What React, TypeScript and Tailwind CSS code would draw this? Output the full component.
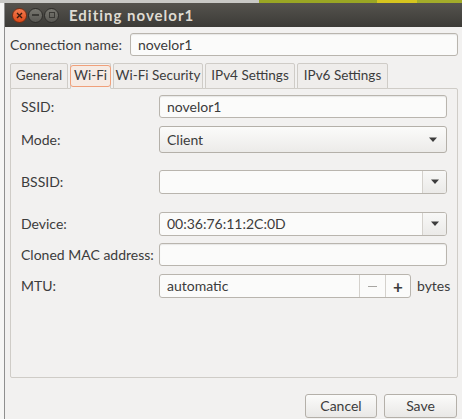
import React from 'react';

const font = { fontFamily: 'Lato, "Noto Sans", sans-serif' };

function Entry({ value, className = '' }: { value?: string; className?: string }) {
  return (
    <div
      className={`h-[23px] flex items-center px-[7px] rounded-[3px] border border-[#b9b5ae] bg-[#fbfbfa] shadow-[inset_0_1px_1px_rgba(0,0,0,0.08)] text-[#3c3c3c] ${className}`}
    >
      {value}
    </div>
  );
}

function Arrow() {
  return (
    <svg width="10" height="6" viewBox="0 0 10 6">
      <path d="M1 0.5h8L5 5z" fill="#3c3c3c" />
    </svg>
  );
}

function Field({ label, children }: { label: string; children: React.ReactNode }) {
  return (
    <div className="flex items-center">
      <div className="w-[138px] text-[#3c3c3c]">{label}</div>
      <div className="w-[288px]">{children}</div>
    </div>
  );
}

const tabs = [
  { name: 'General', w: 'w-[58px]' },
  { name: 'Wi-Fi', w: 'w-[41px]' },
  { name: 'Wi-Fi Security', w: 'w-[90px]' },
  { name: 'IPv4 Settings', w: 'w-[90px]' },
  { name: 'IPv6 Settings', w: 'w-[91px]' },
];

export default function App() {
  return (
    <div className="w-[462px] h-[419px] overflow-hidden bg-[#f2f1f0] text-[14px] leading-none" style={font}>
      {/* desktop strip above the window */}
      <div className="flex h-[3px]">
        <div className="w-[259px] bg-[#c9c9c6]" />
        <div className="w-[118px] bg-[#9aa624]" />
        <div className="w-[40px] bg-[#d6c51e]" />
        <div className="flex-1 bg-[#a3ac2a]" />
      </div>

      <div className="flex h-[416px]">
        <div className="w-[5px] bg-[#f6f6f5] border-r border-[#8f8f8f]" />

        <div className="flex-1 flex flex-col">
          {/* title bar */}
          <div className="h-[24px] flex items-center bg-gradient-to-b from-[#55534e] to-[#3c3b37]">
            <div className="flex items-center gap-[1px] pl-[7px]">
              <div className="w-[15px] h-[15px] rounded-full bg-gradient-to-b from-[#f47a4d] to-[#dd4814] border border-[#7a2d12] flex items-center justify-center">
                <svg width="7" height="7" viewBox="0 0 7 7">
                  <path d="M1 1l5 5M6 1l-5 5" stroke="#3a1a0e" strokeWidth="1.4" />
                </svg>
              </div>
              <div className="w-[15px] h-[15px] rounded-full bg-gradient-to-b from-[#77766f] to-[#5a5954] border border-[#2e2d2a] flex items-center justify-center">
                <div className="w-[7px] h-[2px] bg-[#3a3935]" />
              </div>
              <div className="w-[15px] h-[15px] rounded-full bg-gradient-to-b from-[#77766f] to-[#5a5954] border border-[#2e2d2a] flex items-center justify-center">
                <div className="w-[6px] h-[6px] border border-[#3a3935]" />
              </div>
            </div>
            <div className="ml-[10px] font-bold text-[15px] tracking-[1px] text-[#dfdbd2]">Editing novelor1</div>
          </div>

          {/* connection name */}
          <div className="flex items-center mt-[6px]">
            <div className="w-[125px] pl-[5px] text-[#3c3c3c]">Connection name:</div>
            <Entry value="novelor1" className="w-[328px]" />
          </div>

          {/* tabs */}
          <div className="flex mt-[7px] ml-[5px] gap-[2px] h-[26px] relative z-10">
            {tabs.map((t) => {
              const active = t.name === 'Wi-Fi';
              return (
                <div
                  key={t.name}
                  className={`${t.w} flex items-center justify-center border border-[#cfccc7] rounded-t-[2px] ${
                    active ? 'border-b-[#f2f1f0] bg-[#f2f1f0]' : 'bg-[#efedeb]'
                  }`}
                >
                  <span
                    className={`px-[3px] py-[3px] rounded-[3px] text-[13.5px] text-[#3c3c3c] whitespace-nowrap ${
                      active ? 'border border-[#f0a07a] bg-[#f6ebe4]' : 'border border-transparent'
                    }`}
                  >
                    {t.name}
                  </span>
                </div>
              );
            })}
          </div>

          {/* panel */}
          <div className="ml-[5px] w-[448px] h-[290px] -mt-px border border-[#cfccc7] rounded-[2px] pl-[10px] pt-[6px] flex flex-col">
            <Field label="SSID:">
              <Entry value="novelor1" />
            </Field>

            <div className="mt-[8px]">
              <Field label="Mode:">
                <div className="h-[27px] flex items-center justify-between pl-[7px] pr-[8px] rounded-[3px] border border-[#b4b0a9] bg-gradient-to-b from-[#fbfbfa] to-[#ecebe9] text-[#3c3c3c]">
                  <span>Client</span>
                  <Arrow />
                </div>
              </Field>
            </div>

            <div className="mt-[17px]">
              <Field label="BSSID:">
                <div className="h-[24px] flex rounded-[3px] border border-[#b9b5ae] bg-[#fbfbfa] overflow-hidden">
                  <div className="flex-1" />
                  <div className="w-[24px] border-l border-[#d4d1cc] bg-gradient-to-b from-[#f8f8f7] to-[#ebeae8] flex items-center justify-center">
                    <Arrow />
                  </div>
                </div>
              </Field>
            </div>

            <div className="mt-[18px]">
              <Field label="Device:">
                <div className="h-[24px] flex rounded-[3px] border border-[#b9b5ae] bg-[#fbfbfa] overflow-hidden text-[#3c3c3c]">
                  <div className="flex-1 flex items-center px-[7px]">00:36:76:11:2C:0D</div>
                  <div className="w-[24px] border-l border-[#d4d1cc] bg-gradient-to-b from-[#f8f8f7] to-[#ebeae8] flex items-center justify-center">
                    <Arrow />
                  </div>
                </div>
              </Field>
            </div>

            <div className="mt-[7px]">
              <Field label="Cloned MAC address:">
                <Entry />
              </Field>
            </div>

            <div className="mt-[8px] flex items-center">
              <div className="w-[138px] text-[#3c3c3c]">MTU:</div>
              <div className="w-[252px] h-[24px] flex rounded-[3px] border border-[#b9b5ae] bg-[#fbfbfa] overflow-hidden text-[#3c3c3c]">
                <div className="flex-1 flex items-center px-[7px]">automatic</div>
                <div className="w-[26px] border-l border-[#d4d1cc] flex items-center justify-center">
                  <div className="w-[9px] h-[1px] bg-[#a8a6a2]" />
                </div>
                <div className="w-[25px] border-l border-[#d4d1cc] flex items-center justify-center text-[17px] font-bold text-[#3c3c3c]">
                  +
                </div>
              </div>
              <div className="ml-[6px] text-[#3c3c3c]">bytes</div>
            </div>
          </div>

          {/* buttons */}
          <div className="flex mt-[16px] ml-[300px] gap-[7px]">
            <button className="w-[72px] h-[24px] rounded-[3px] border border-[#b4b0a9] bg-gradient-to-b from-[#fbfbfa] to-[#e9e8e6] text-[#3c3c3c]">
              Cancel
            </button>
            <button className="w-[73px] h-[24px] rounded-[3px] border border-[#b4b0a9] bg-gradient-to-b from-[#fbfbfa] to-[#e9e8e6] text-[#3c3c3c]">
              Save
            </button>
          </div>
        </div>
      </div>
    </div>
  );
}
